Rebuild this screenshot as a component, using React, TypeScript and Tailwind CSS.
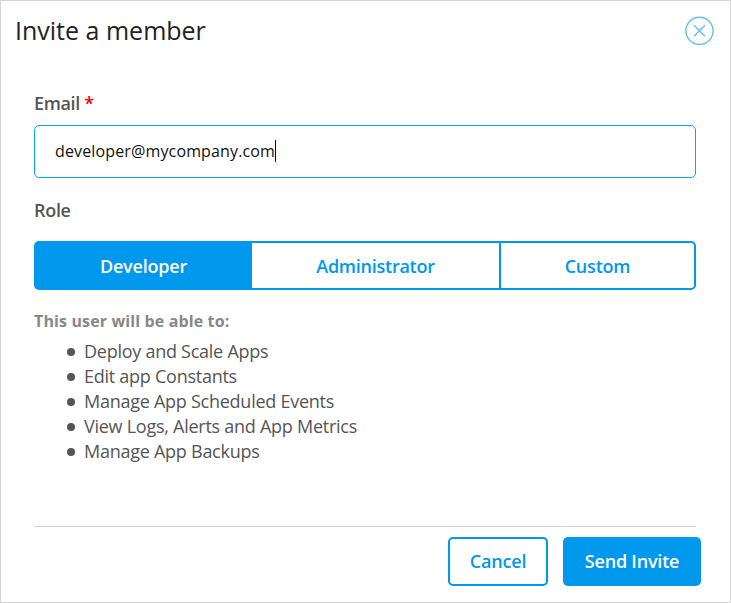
const abilities = [
  'Deploy and Scale Apps',
  'Edit app Constants',
  'Manage App Scheduled Events',
  'View Logs, Alerts and App Metrics',
  'Manage App Backups',
];

export default function App() {
  return (
    <div className="flex h-[603px] w-[731px] flex-col border border-[#d5d5d5] bg-white font-['Open_Sans',sans-serif] text-[#555]">
      <header className="flex h-[58px] items-center justify-between pl-[14px] pr-4">
        <h1 className="text-[25px] leading-[34px] text-[#222]">Invite a member</h1>
        <button aria-label="Close" className="size-[29px]">
          <svg viewBox="0 0 29 29" className="size-full" fill="none" stroke="#66bfea" strokeWidth="1.4">
            <circle cx="14.5" cy="14.8" r="13.6" />
            <path d="M9 9.3l11 11M20 9.3l-11 11" />
          </svg>
        </button>
      </header>
      <main className="flex h-[467px] flex-col pl-[33px] pr-[34px] pt-[32px]">
        <label className="text-[18px] font-semibold leading-6 tracking-[-0.35px]">Email <span className="text-[#f00]">*</span></label>
        <div className="mt-[10px] flex h-[53px] items-center rounded-[5px] border border-[#0ba5f5] pb-0.5 pl-5 text-base tracking-[0.14px] text-[#111]">
          developer@mycompany.com<span className="h-[22px] w-px bg-black" />
        </div>
        <div className="mt-5 text-[18px] font-semibold leading-6 tracking-[-0.3px]">Role</div>
        <div className="mt-[19px] flex h-[49px] rounded-[5px] border-2 border-[#0098ed] text-lg font-semibold text-[#0098ed]">
          <button className="w-[216px] bg-[#0098ed] pr-px tracking-[-0.2px] text-white">Developer</button>
          <button className="w-[249px] border-r-2 border-[#0098ed] tracking-[-0.25px]">Administrator</button>
          <button className="flex-1 tracking-[-0.2px]">Custom</button>
        </div>
        <p className="mt-5 text-base font-bold leading-[22px] tracking-[0.13px] text-[#888]">This user will be able to:</p>
        <ul className="mt-[7px] pl-[33px] text-lg leading-[25px] tracking-[-0.26px]">
          {abilities.map((a) => (
            <li key={a} className="flex items-center gap-[9px]">
              <span className="size-2 rounded-full bg-[#555]" />
              {a}
            </li>
          ))}
        </ul>
      </main>
      <footer className="flex flex-col">
        <hr className="ml-[33px] mr-[34px] border-[#d5d5d5]" />
        <div className="mr-[29px] flex justify-end gap-[15px] pt-[10px] text-lg font-semibold tracking-[-0.2px]">
          <button className="h-[49px] w-[100px] rounded-[5px] border-2 border-[#0098ed] pb-0.5 text-[#0098ed]">Cancel</button>
          <button className="h-[49px] w-[138px] rounded-[5px] bg-[#0098ed] pb-0.5 text-white">Send Invite</button>
        </div>
      </footer>
    </div>
  );
}
